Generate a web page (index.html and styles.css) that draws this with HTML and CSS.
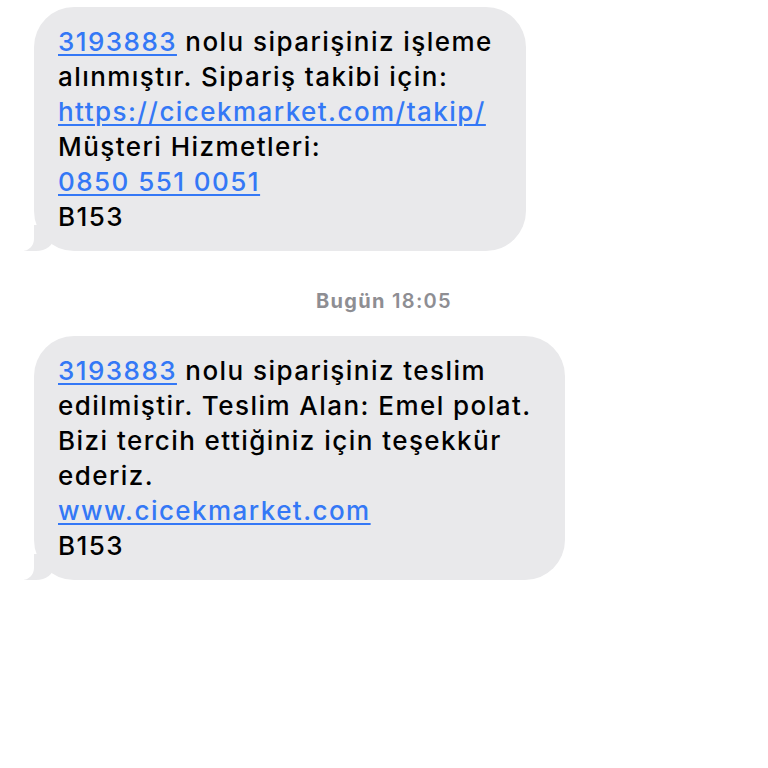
FILE: index.html
```html
<!DOCTYPE html>
<html lang="tr">
<head>
	<meta charset="UTF-8">
	<title>Mesajlar</title>
	<link rel="stylesheet" href="styles.css">
</head>
<body>
	<div class="thread">
		<div class="bubble first">
			<a href="#">3193883</a> nolu siparişiniz işleme<br>
			alınmıştır. Sipariş takibi için:<br>
			<a href="#">https://cicekmarket.com/takip/</a><br>
			Müşteri Hizmetleri:<br>
			<a href="#">0850 551 0051</a><br>
			B153
		</div>
		<div class="stamp"><b>Bugün</b> 18:05</div>
		<div class="bubble">
			<a href="#">3193883</a> nolu siparişiniz teslim<br>
			edilmiştir. Teslim Alan: Emel polat.<br>
			Bizi tercih ettiğiniz için teşekkür<br>
			ederiz.<br>
			<a href="#">www.cicekmarket.com</a><br>
			B153
		</div>
	</div>
</body>
</html>
```
FILE: styles.css
```css
*{
	margin: 0;
	padding: 0;
}
body{
	background: #fff;
	font-family: Inter, "Noto Sans", sans-serif;
}
.thread{
	padding: 7px 0 0 34px;
	display: flex;
	flex-direction: column;
	align-items: flex-start;
}
.bubble{
	position: relative;
	background: #e9e9eb;
	color: #000;
	font-size: 26px;
	font-weight: 500;
	letter-spacing: 1.45px;
	line-height: 35px;
	padding: 17px 33px 17px 24px;
	border-radius: 40px;
	white-space: nowrap;
}
.bubble a{
	color: #3478f6;
	text-decoration: underline;
	text-underline-offset: 3px;
	text-decoration-thickness: 2px;
}
/* kuyruk */
.bubble:before{
	content: "";
	position: absolute;
	left: -10px;
	bottom: 0;
	width: 30px;
	height: 26px;
	background: #e9e9eb;
	border-bottom-right-radius: 18px 14px;
}
.bubble:after{
	content: "";
	position: absolute;
	left: -20px;
	bottom: 0;
	width: 20px;
	height: 26px;
	background: #fff;
	border-bottom-right-radius: 12px;
}
.stamp{
	align-self: center;
	margin: 39px 0 24px -34px;
	font-size: 20px;
	letter-spacing: 1.3px;
	line-height: 22px;
	color: #8e8e93;
	font-weight: 600;
}
.stamp b{
	font-weight: 700;
}
```
